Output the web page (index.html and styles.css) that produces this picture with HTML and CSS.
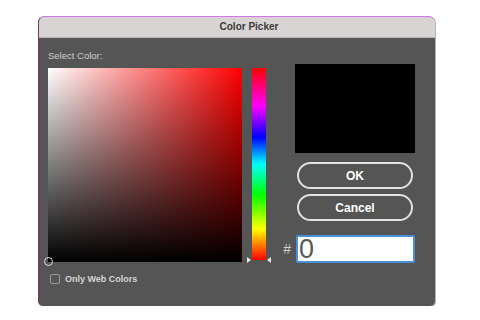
FILE: index.html
```html
<!DOCTYPE html>
<html lang="en">
<head>
    <meta charset="UTF-8">
    <meta name="viewport" content="width=device-width, initial-scale=1.0">
    <title>Color Picker</title>
    <link rel="stylesheet" href="styles.css">
</head>
<body>
    <div class="window">
        <div class="titlebar">Color Picker</div>
        <div class="content">
            <div class="left">
                <div class="label">Select Color:</div>
                <div class="square">
                    <div class="square-white"></div>
                    <div class="square-black"></div>
                    <div class="square-marker"></div>
                </div>
                <label class="check">
                    <span class="box"></span>
                    Only Web Colors
                </label>
            </div>
            <div class="hue">
                <div class="hue-bar"></div>
                <span class="arrow arrow-left"></span>
                <span class="arrow arrow-right"></span>
            </div>
            <div class="right">
                <div class="preview"></div>
                <button class="btn btn-ok">OK</button>
                <button class="btn">Cancel</button>
                <div class="hex-row">
                    <span class="hash">#</span>
                    <div class="hex-input">0</div>
                </div>
            </div>
        </div>
    </div>
</body>
</html>
```

FILE: styles.css
```css
body {
    margin: 0;
    background-color: #ffffff;
    font-family: "Liberation Sans", Arial, sans-serif;
}
.window {
    margin: 16px 0 0 38px;
    width: 397px;
    height: 290px;
    background-color: #555555;
    border-radius: 6px 6px 5px 5px;
    border-top: 1px solid #d575e6;
    border-left: 1px solid #6a3a66;
    box-sizing: border-box;
    overflow: hidden;
    box-shadow: 1px 1px 0 #b9b2b2;
}
.titlebar {
    height: 20px;
    line-height: 20px;
    background-color: #d9d4d4;
    border-bottom: 1px solid #bdb8b8;
    color: #3a3a3a;
    font-size: 10px;
    font-weight: bold;
    text-align: center;
    padding-left: 24px;
}
.content {
    display: flex;
    padding: 12px 0 0 9px;
}
.left {
    width: 194px;
}
.label {
    color: #cfcfcf;
    font-size: 9.5px;
    line-height: 11px;
    margin-bottom: 7px;
}
.square {
    position: relative;
    width: 194px;
    height: 194px;
    background-color: #ff0000;
}
.square-white {
    position: absolute;
    inset: 0;
    background: linear-gradient(to right, #ffffff, rgba(255,255,255,0));
}
.square-black {
    position: absolute;
    inset: 0;
    background: linear-gradient(to bottom, rgba(0,0,0,0), #000000);
}
.square-marker {
    position: absolute;
    left: -4px;
    bottom: -4px;
    width: 7px;
    height: 7px;
    border: 1px solid #dddddd;
    border-radius: 50%;
}
.check {
    display: flex;
    align-items: center;
    gap: 5px;
    margin: 12px 0 0 2px;
    color: #d6d6d6;
    font-size: 9px;
    font-weight: bold;
}
.box {
    width: 8px;
    height: 8px;
    border: 1px solid #9a9a9a;
    border-radius: 2px;
}
.hue {
    position: relative;
    margin-left: 10px;
    margin-top: 18px;
    width: 14px;
}
.hue-bar {
    width: 14px;
    height: 192px;
    background: linear-gradient(to bottom, #ff0000, #ff00ff 20%, #0000ff 36%, #00ffff 50%, #00ff00 66%, #ffff00 84%, #ff0000);
}
.arrow {
    position: absolute;
    top: 189px;
    width: 0;
    height: 0;
    border-top: 3px solid transparent;
    border-bottom: 3px solid transparent;
}
.arrow-left {
    left: -5px;
    border-left: 4px solid #e6e6e6;
}
.arrow-right {
    right: -5px;
    border-right: 4px solid #e6e6e6;
}
.right {
    display: flex;
    flex-direction: column;
    align-items: flex-end;
    margin-left: 14px;
    margin-top: 14px;
    width: 135px;
}
.preview {
    width: 120px;
    height: 89px;
    background-color: #000000;
}
.btn {
    width: 116px;
    height: 27px;
    margin: 9px 2px 0 0;
    background: transparent;
    border: 2px solid #e2e2e2;
    border-radius: 14px;
    color: #ffffff;
    font-family: "Liberation Sans", Arial, sans-serif;
    font-size: 12px;
    font-weight: bold;
}
.btn-ok {
    margin-top: 9px;
}
.btn + .btn {
    margin-top: 5px;
}
.hex-row {
    display: flex;
    align-items: center;
    margin-top: 14px;
}
.hash {
    color: #cfcfcf;
    font-size: 14px;
    margin-right: 5px;
}
.hex-input {
    width: 114px;
    height: 24px;
    line-height: 24px;
    background-color: #ffffff;
    border: 2px solid #4a90d9;
    border-radius: 2px;
    color: #5a5a5a;
    font-size: 27px;
    padding-left: 1px;
    box-sizing: content-box;
}
```
